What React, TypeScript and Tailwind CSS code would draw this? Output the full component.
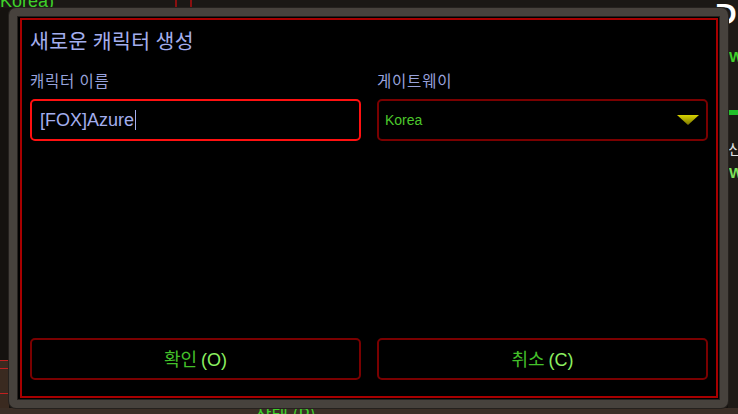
import React from "react";

const kr = { fontFamily: '"Noto Sans CJK KR", "Noto Sans", sans-serif' };
const lat = { fontFamily: '"Liberation Sans", "Noto Sans CJK KR", sans-serif' };

function Triangle() {
  return (
    <svg width="22" height="10" viewBox="0 0 22 10">
      <defs>
        <linearGradient id="tg" x1="0" y1="0" x2="0" y2="1">
          <stop offset="0" stopColor="#d8d400" />
          <stop offset="1" stopColor="#7a7400" />
        </linearGradient>
      </defs>
      <polygon points="0,0 22,0 11,10" fill="url(#tg)" />
    </svg>
  );
}

export default function App() {
  return (
    <div className="relative w-[738px] h-[414px] overflow-hidden bg-[#15120f]">
      {/* game background fragments */}
      <div className="absolute left-0 top-0 w-[738px] h-[8px] bg-[#1b1815]" />
      <span
        className="absolute left-[-6px] top-[-9px] text-[18px] text-[#3fd12a] leading-[20px]"
        style={lat}
      >
        (Korea)
      </span>
      <div className="absolute left-[175px] top-0 w-[2px] h-[8px] bg-[#8a1010]" />
      <div className="absolute left-[190px] top-0 w-[2px] h-[8px] bg-[#8a1010]" />
      <div className="absolute left-[0px] top-[360px] w-[9px] h-[48px] bg-[#3a2a20]" />
      <div className="absolute left-[0px] top-[360px] w-[9px] h-[1px] bg-[#c02020]" />
      <div className="absolute left-[0px] top-[368px] w-[9px] h-[1px] bg-[#c02020]" />
      <div className="absolute left-[0px] top-[393px] w-[9px] h-[1px] bg-[#c02020]" />
      <div className="absolute left-[728px] top-0 w-[10px] h-[414px] bg-[#1e1a16]" />
      <span className="absolute left-[715px] top-[-2px] text-[30px] font-bold text-white leading-[32px]" style={lat}>
        D
      </span>
      <span className="absolute left-[729px] top-[48px] text-[15px] font-bold text-[#3fd12a] leading-[18px]" style={lat}>
        W
      </span>
      <div className="absolute left-[728px] top-[110px] w-[10px] h-[5px] bg-[#22c02a]" />
      <span className="absolute left-[728px] top-[140px] text-[15px] text-[#e0e0e0] leading-[18px]" style={kr}>
        신
      </span>
      <span className="absolute left-[729px] top-[164px] text-[15px] font-bold text-[#7ee05a] leading-[18px]" style={lat}>
        W
      </span>
      <div className="absolute left-0 top-[408px] w-[738px] h-[6px] bg-[#3b2e26]" />
      <span
        className="absolute left-[255px] top-[404px] text-[18px] text-[#3fd12a] leading-[20px]"
        style={kr}
      >
        상태 (P)
      </span>

      {/* dialog */}
      <div className="relative pl-[9px] pt-[8px]">
        <div
          className="w-[719px] h-[400px] rounded-[7px] border-[8px] border-[#47423d] bg-black"
          style={{ boxShadow: "inset 0 0 0 1px #25211e, 0 0 0 1px #25211e" }}
        >
          <div className="ml-[3px] mt-[2px] mr-[2px] w-[698px] h-[380px] border-2 border-[#a80000] flex flex-col px-[8px]">
            <div
              className="h-[40px] leading-[40px] text-[20.5px] tracking-[0.4px] text-[#a3aeee]"
              style={kr}
            >
              새로운 캐릭터 생성
            </div>
            <div className="grid grid-cols-2 gap-x-[16px] mt-[10px]">
              <div className="flex flex-col">
                <div className="h-[20px] leading-[20px] text-[15.5px] tracking-[0.8px] text-[#98a2dc]" style={kr}>
                  캐릭터 이름
                </div>
                <div className="mt-[9px] h-[42px] rounded-[5px] border-2 border-[#ff1010] flex items-center pl-[8px]">
                  <span className="text-[18px] text-[#a3aeee] leading-[22px]" style={lat}>
                    [FOX]Azure
                  </span>
                  <span className="ml-[1px] w-[1px] h-[20px] bg-[#a3aeee]" />
                </div>
              </div>
              <div className="flex flex-col">
                <div className="h-[20px] leading-[20px] text-[15.5px] tracking-[0.8px] text-[#98a2dc]" style={kr}>
                  게이트웨이
                </div>
                <div className="mt-[9px] h-[42px] rounded-[5px] border-2 border-[#7a0000] flex items-center pl-[6px] pr-[7px]">
                  <span className="text-[14px] text-[#4cc82c] leading-[18px] flex-1" style={lat}>
                    Korea
                  </span>
                  <Triangle />
                </div>
              </div>
            </div>
            <div className="mt-auto mb-[16px] grid grid-cols-2 gap-x-[16px]">
              <div className="h-[42px] rounded-[5px] border-2 border-[#7a0000] flex items-center justify-center">
                <span className="text-[18px] text-[#44c02a] leading-[22px]" style={kr}>
                  확인 <span className="text-[#8cf060]" style={lat}>(O)</span>
                </span>
              </div>
              <div className="h-[42px] rounded-[5px] border-2 border-[#7a0000] flex items-center justify-center">
                <span className="text-[18px] text-[#44c02a] leading-[22px]" style={kr}>
                  취소 <span className="text-[#8cf060]" style={lat}>(C)</span>
                </span>
              </div>
            </div>
          </div>
        </div>
      </div>
    </div>
  );
}
